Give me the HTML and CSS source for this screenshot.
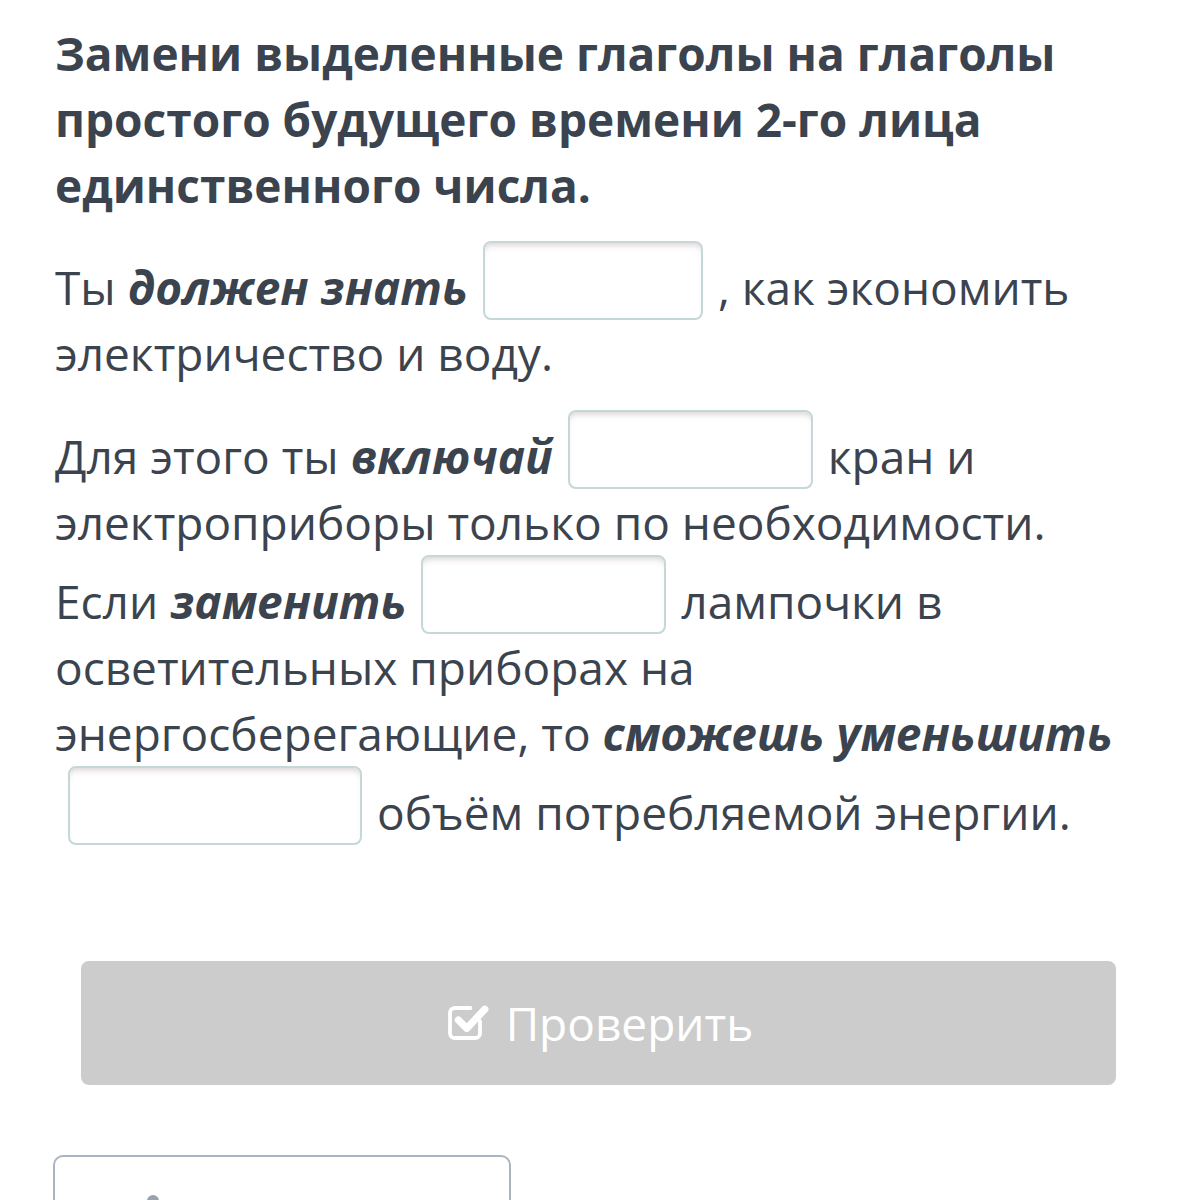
FILE: index.html
```html
<!DOCTYPE html>
<html lang="ru">
<head>
<meta charset="utf-8">
<link rel="stylesheet" href="styles.css">
</head>
<body>
<main class="task">
  <h1 class="title">Замени выделенные глаголы на глаголы простого будущего времени 2-го лица единственного числа.</h1>
  <p class="text">Ты <b class="verb">должен знать</b><span class="gap gap-a"></span>, как экономить электричество и воду.</p>
  <p class="text">Для этого ты <b class="verb">включай</b><span class="gap gap-b"></span>кран и электроприборы только по необходимости. Если <b class="verb">заменить</b><span class="gap gap-b"></span>лампочки в осветительных приборах на энергосберегающие, то <b class="verb">сможешь уменьшить</b> <span class="gap gap-c"></span>объём потребляемой энергии.</p>
  <div class="actions">
    <button class="check" type="button">
      <svg class="check-icon" viewBox="0 0 40 40" aria-hidden="true">
        <path d="M30 21v10a4 4 0 0 1-4 4H9a4 4 0 0 1-4-4V14a4 4 0 0 1 4-4h13" fill="none" stroke="#fff" stroke-width="3.2" stroke-linecap="round"/>
        <path d="M12 20l7 7L34 11" fill="none" stroke="#fff" stroke-width="6" stroke-linecap="round" stroke-linejoin="round"/>
      </svg>
      <span>Проверить</span>
    </button>
  </div>
  <div class="hint"><span class="hint-dot"></span></div>
</main>
</body>
</html>
```
FILE: styles.css
```css
html, body {
  margin: 0;
  padding: 0;
  background: #ffffff;
}
body {
  font-family: "Open Sans", "Noto Sans", sans-serif;
  color: #3b444e;
  overflow: hidden;
  height: 1200px;
}
.task {
  padding: 20px 70px 0 55px;
}
.title {
  margin: 0 0 23px;
  font-size: 46px;
  line-height: 66px;
  font-weight: 700;
}
.text {
  margin: 0 0 24px;
  font-size: 46px;
  line-height: 66px;
  font-weight: 400;
}
.verb {
  font-weight: 700;
  font-style: italic;
}
.gap {
  display: inline-block;
  height: 75px;
  margin: 0 15px;
  vertical-align: -15px;
  border: 2px solid #c6d7d9;
  border-radius: 8px;
  box-shadow: inset 0 6px 6px -4px rgba(150, 120, 120, 0.35);
  background: #fff;
}
.gap-a { width: 216px; }
.gap-b { width: 241px; }
.gap-c { width: 290px; margin-left: 13px; }
.actions {
  padding: 92px 3px 0 26px;
}
.check {
  display: flex;
  align-items: center;
  justify-content: center;
  gap: 14px;
  width: 1035px;
  height: 124px;
  border: 0;
  border-radius: 8px;
  background: #cccccc;
  color: #ffffff;
  font-family: "Open Sans", "Noto Sans", sans-serif;
  font-size: 46px;
  padding: 0;
}
.check-icon {
  width: 48px;
  height: 48px;
  margin-top: -6px;
}
.hint {
  margin: 70px 0 0 -2px;
  width: 454px;
  height: 80px;
  border: 2px solid #a9b5c0;
  border-radius: 10px;
  position: relative;
}
.hint-dot {
  position: absolute;
  left: 92px;
  top: 38px;
  width: 12px;
  height: 12px;
  border-radius: 50%;
  background: #9aa3ad;
}
```
